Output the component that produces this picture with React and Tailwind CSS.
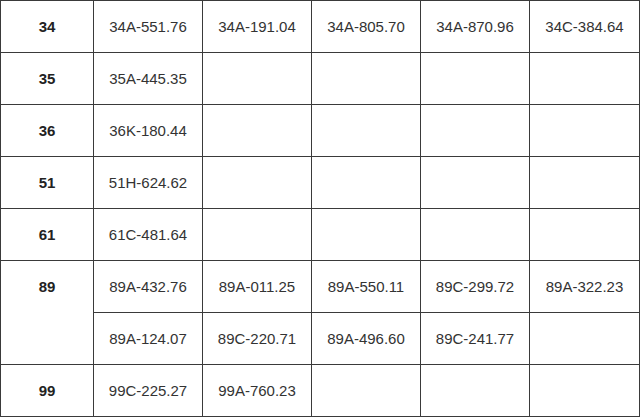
import React from 'react'

const rows = [
  { code: '34', lines: [['34A-551.76', '34A-191.04', '34A-805.70', '34A-870.96', '34C-384.64']] },
  { code: '35', lines: [['35A-445.35']] },
  { code: '36', lines: [['36K-180.44']] },
  { code: '51', lines: [['51H-624.62']] },
  { code: '61', lines: [['61C-481.64']] },
  {
    code: '89',
    lines: [
      ['89A-432.76', '89A-011.25', '89A-550.11', '89C-299.72', '89A-322.23'],
      ['89A-124.07', '89C-220.71', '89A-496.60', '89C-241.77'],
    ],
  },
  { code: '99', lines: [['99C-225.27', '99A-760.23']] },
]

const cell = 'border border-[#3a3a3a] h-[52px] px-2 py-[15px] text-center align-top leading-[21px]'

export default function App() {
  return (
    <div className="w-[640px] h-[419px] overflow-hidden bg-white" style={{ fontFamily: '"Liberation Sans", Arial, sans-serif' }}>
      <table className="w-[639px] table-fixed border-collapse text-[15px] text-[#333]">
        <colgroup>
          <col className="w-[93px]" />
          <col className="w-[109px]" />
          <col className="w-[109px]" />
          <col className="w-[109px]" />
          <col className="w-[109px]" />
          <col className="w-[110px]" />
        </colgroup>
        <tbody>
          {rows.map((row) =>
            row.lines.map((line, i) => (
              <tr key={row.code + i}>
                {i === 0 && (
                  <td rowSpan={row.lines.length} className={`${cell} font-bold text-[#222]`}>
                    {row.code}
                  </td>
                )}
                {[0, 1, 2, 3, 4].map((j) => (
                  <td key={j} className={cell}>
                    {line[j] || ''}
                  </td>
                ))}
              </tr>
            ))
          )}
        </tbody>
      </table>
    </div>
  )
}
